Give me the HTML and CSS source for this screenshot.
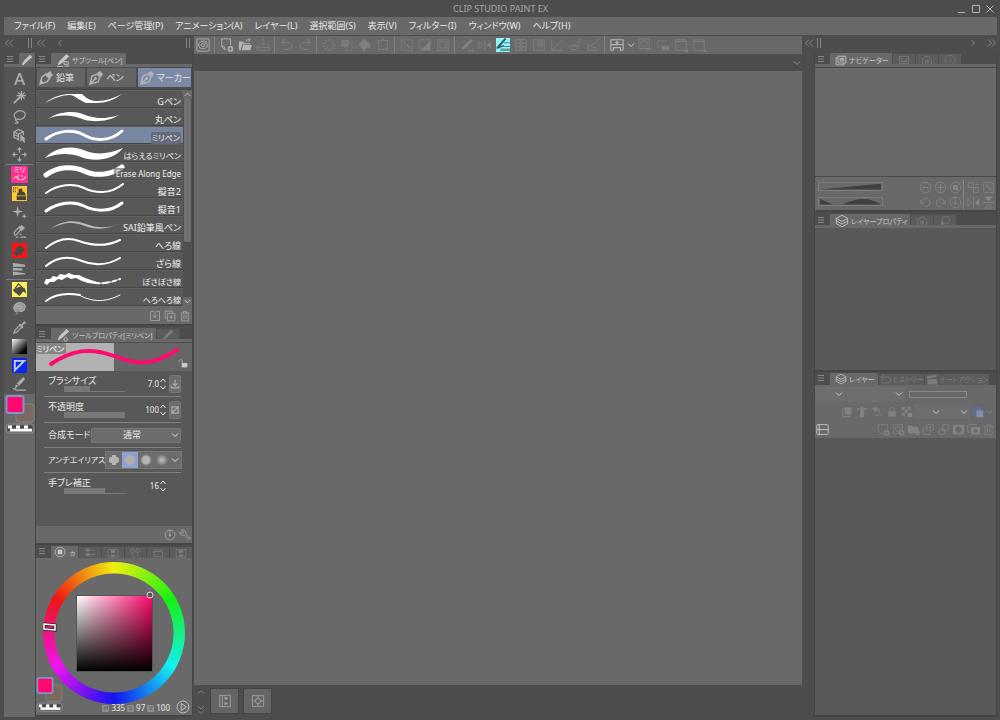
FILE: index.html
```html
<!DOCTYPE html>
<html lang="ja">
<head>
<meta charset="utf-8">
<meta name="viewport" content="width=device-width, initial-scale=1">
<title>CLIP STUDIO PAINT EX</title>
<link rel="stylesheet" href="styles.css">
</head>
<body>
<svg class="sprite" aria-hidden="true">
  <symbol id="dleft" viewBox="0 0 10 10"><path d="M5 1.500L1.500 5L5 8.500M9 1.500L5.500 5L9 8.500"/></symbol>
  <symbol id="dright" viewBox="0 0 10 10"><path d="M1 1.500L4.500 5L1 8.500M5 1.500L8.500 5L5 8.500"/></symbol>
  <symbol id="left" viewBox="0 0 10 10"><path d="M6.500 2L3.500 5L6.500 8"/></symbol>
  <symbol id="right" viewBox="0 0 10 10"><path d="M3.500 2L6.500 5L3.500 8"/></symbol>
  <symbol id="down" viewBox="0 0 10 10"><path d="M2 3.500L5 6.500L8 3.500"/></symbol>
  <symbol id="up" viewBox="0 0 10 10"><path d="M2 6.500L5 3.500L8 6.500"/></symbol>
  <symbol id="ddown" viewBox="0 0 10 10"><path d="M2 1L5 4L8 1M2 5.500L5 8.500L8 5.500"/></symbol>
  <symbol id="spin" viewBox="0 0 8 14"><path d="M1.500 5L4 2L6.500 5M1.500 9L4 12L6.500 9"/></symbol>
  <symbol id="grip" viewBox="0 0 10 10"><path d="M3.500 0V10M6.500 0V10"/></symbol>
  <symbol id="menu" viewBox="0 0 10 10"><path d="M2 2.500H8M2 5H8M2 7.500H8"/></symbol>
  <symbol id="marker" viewBox="0 0 16 16"><path class="f" d="M2 13L4 9L12 1L15 4L7 11L3 14ZM1 15H8V16H1Z"/><path d="M9 10H14V13H9ZM10 15H15"/></symbol>
  <symbol id="brushgear" viewBox="0 0 16 16"><path class="f" d="M2 13L4 9L12 1L15 4L7 11L3 14Z"/><circle cx="11" cy="13" r="2"/></symbol>
  <symbol id="brushonly" viewBox="0 0 16 16"><path class="f" d="M1 14L4 9L12 1L15 4L7 11L3 15Z"/></symbol>
  <symbol id="nib" viewBox="0 0 16 16"><path stroke-width="1.400" d="M2 14L4 6L9 4L12 7L10 12ZM2 14L7 9"/><path class="f" d="M9 3L12 1L15 4L13 7Z"/><circle class="f" cx="7.500" cy="8.500" r="1.400"/></symbol>
  <symbol id="pencil" viewBox="0 0 16 16"><path stroke-width="1.400" d="M2 14L4 7L8 4L12 8L9 12Z"/><path class="f" d="M7 5L12 1L15 5L11 9ZM2 14L3 10L6 13Z"/></symbol>
  <symbol id="wand" viewBox="0 0 16 16"><path class="t" d="M2 14L9 7"/><path d="M10 1V11M5 6H15M6.500 2.500L13.500 9.500M13.500 2.500L6.500 9.500"/></symbol>
  <symbol id="lasso" viewBox="0 0 16 16"><path d="M4 10C-1 6 6 1 10 2C17 3 14 11 8 11C5 11 3 10 4 12C5 14 7 13 6 15H3"/></symbol>
  <symbol id="cube" viewBox="0 0 16 16"><path d="M2 4L7 1.500L12 4V8M2 4V10L7 12.500V6.500L2 4M7 6.500L12 4M2 7L7 9"/><path class="f" d="M9 7V15L11 13L13 16L14 15L13 12H15Z"/></symbol>
  <symbol id="move" viewBox="0 0 16 16"><path d="M8 1V6M8 10V15M1 8H6M10 8H15M6 3L8 1L10 3M6 13L8 15L10 13M3 6L1 8L3 10M13 6L15 8L13 10"/></symbol>
  <symbol id="spark" viewBox="0 0 16 16"><path class="f" d="M6 1L7.200 5.800L12 7L7.200 8.200L6 13L4.800 8.200L0 7L4.800 5.800ZM13 9L13.700 11.300L16 12L13.700 12.700L13 15L12.300 12.700L10 12L12.300 11.300Z"/></symbol>
  <symbol id="eraser" viewBox="0 0 16 16"><path d="M3 8L8 3L10 5L5 11C2 14 2 9 3 8M4 14H7M9 14H15M8 11H10"/><path class="f" d="M7 4L10 1L14 4L10 8Z"/></symbol>
  <symbol id="gradlines" viewBox="0 0 16 16"><path class="f" d="M1 1H2L14 3V5H1ZM1 6L11 7V9H1ZM1 10L14 12V13L1 14Z"/></symbol>
  <symbol id="blob" viewBox="0 0 16 16"><path class="f" d="M4 12C-2 7 5 1 10 2C17 4 14 12 8 11C5 10 9 13 3 15L6 12Z" opacity=".75"/><path d="M4 11C-1 6 5 1 10 2C17 4 14 12 8 11M4 8C4 5 11 4 11 7C10 9 6 9 7 7"/></symbol>
  <symbol id="dropper" viewBox="0 0 16 16"><path d="M2 14L3 11L9 5L11 7L5 13Z"/><path class="f" d="M8 4L10 5L13 1L15 3L11 6L12 8L11 9L7 5Z"/></symbol>
  <symbol id="fixline" viewBox="0 0 16 16"><path d="M1 12L5 14H15"/><path class="f" d="M3 13L4 8L7 9ZM5 7L12 0L14 2L8 9Z"/></symbol>
  <symbol id="swirl" viewBox="0 0 16 16"><rect x="1" y="1" width="14" height="14" rx="1"/><path d="M13 5C9 2 3 4 3 8C3 14 12 13 13 9C13 4 6 5 6 8C6 11 11 10 10 8C9 7 8 8 8 8"/></symbol>
  <symbol id="newdoc" viewBox="0 0 16 16"><path d="M7 13H5L2 10V1H12V8M2 10H5V13"/><circle class="f" cx="12" cy="12.500" r="3.300"/><path class="k" d="M12 10.500V14.500M10 12.500H14"/></symbol>
  <symbol id="open" viewBox="0 0 16 16"><path class="f" d="M1 4H6L7 6H14V7H5L3 14H1ZM6 8H16L14 14H4Z"/><path d="M9 4C9 2 11 2 14 2M12 0.500L14 2L12 4"/></symbol>
  <symbol id="save" viewBox="0 0 16 16"><path d="M3 6L1 11V14H15V11L13 6M1 11H15M8 1V8M5 5.500L8 8.500L11 5.500"/></symbol>
  <symbol id="undo" viewBox="0 0 16 16"><path d="M6 1L2 5L6 8M2 5H9C15 5 15 13 9 13H4"/></symbol>
  <symbol id="redo" viewBox="0 0 16 16"><path d="M10 1L14 5L10 8M14 5H7C1 5 1 13 7 13H12"/></symbol>
  <symbol id="burst" viewBox="0 0 16 16"><circle class="dash" cx="8" cy="8" r="5.500"/></symbol>
  <symbol id="outfill" viewBox="0 0 16 16"><path class="f" d="M1 2H10V10H1Z" opacity=".7"/><circle class="dash2" cx="10" cy="10" r="4.500"/></symbol>
  <symbol id="bucket" viewBox="0 0 16 16"><path class="f" d="M1 7L7 1L13 6L15 13L11 10L7 15L1 8Z"/></symbol>
  <symbol id="crop" viewBox="0 0 16 16"><path d="M3 3H13V13H3ZM8 0V3M1 3H3M13 3H15M3 13V15M13 13V15"/></symbol>
  <symbol id="desel" viewBox="0 0 16 16"><path stroke-dasharray="2 1" d="M2 2H14V14H2Z"/><path d="M2 2L14 14"/></symbol>
  <symbol id="invsel" viewBox="0 0 16 16"><path stroke-dasharray="2 1" d="M2 2H14V14H2Z"/><path class="f" d="M14 3V14H3Z"/></symbol>
  <symbol id="bordersel" viewBox="0 0 16 16"><rect x="2" y="2" width="12" height="12"/><rect x="4.500" y="4.500" width="7" height="7"/></symbol>
  <symbol id="pen2" viewBox="0 0 16 16"><path class="f" d="M1 14L4 9L12 1L15 3L7 11ZM9 14H13L15 12V15H9Z"/></symbol>
  <symbol id="mirror" viewBox="0 0 16 16"><path d="M1 4V12L6 8ZM8 2V14"/><path class="f" d="M15 4V12L10 8Z"/></symbol>
  <symbol id="split" viewBox="0 0 16 16"><path d="M2 2H14V14H2ZM2 6H7M2 10H7M9 6H14M9 10H14M7 2V14M9 2V14"/></symbol>
  <symbol id="gradbox" viewBox="0 0 16 16"><rect x="2" y="2" width="12" height="12"/><path class="f" d="M6 3H13V10H6Z" opacity=".6"/></symbol>
  <symbol id="ruler1" viewBox="0 0 16 16"><path d="M2 3V14H14M3 13L15 2"/></symbol>
  <symbol id="ruler2" viewBox="0 0 16 16"><path d="M1 9C2 15 11 15 12 9M6 10L15 1M1 9H12"/></symbol>
  <symbol id="ruler3" viewBox="0 0 16 16"><path d="M2 9H7L15 1M2 9V14H14M6 11H12"/></symbol>
  <symbol id="device" viewBox="0 0 16 16"><path stroke-width="1.300" d="M1 7V2H15V7M1 7.500H15V14M1 7V14H4V11H12V14H15"/><path class="f" d="M7 4H9V8H7ZM5 5L8 3L11 5Z"/></symbol>
  <symbol id="zoomswap" viewBox="0 0 16 16"><rect x="1" y="1" width="12" height="11" rx="1"/><circle cx="7" cy="6.500" r="3.500"/><path d="M9 13H15L13 11"/></symbol>
  <symbol id="window" viewBox="0 0 16 16"><rect x="2" y="2" width="12" height="12" rx="1"/><path d="M2 4H14"/><path class="f" d="M12 16L16 12V16Z"/></symbol>
  <symbol id="handoff" viewBox="0 0 16 16"><path stroke-dasharray="2 1" d="M2 3H12M2 3V10H7"/><path class="f" d="M7 9H15V14H7Z"/></symbol>
  <symbol id="dlbox" viewBox="0 0 16 16"><path d="M6 2H2V14H14V2H10M8 1V10M5 7L8 10L11 7"/></symbol>
  <symbol id="copyplus" viewBox="0 0 16 16"><path d="M4 11H1.500V1.500H11V4"/><rect x="4.500" y="4.500" width="10" height="10" rx="1"/><path d="M9.500 7V12M7 9.500H12"/></symbol>
  <symbol id="trash" viewBox="0 0 16 16"><path d="M2 4H14M6 4V2H10V4M3.500 4V14.500H12.500V4M6.500 6V12M9.500 6V12"/></symbol>
  <symbol id="lock" viewBox="0 0 16 16"><path class="f" d="M6 8H15V15H6Z"/><path d="M7 8V5C7 2 1 2 1.500 6"/></symbol>
  <symbol id="padlock" viewBox="0 0 16 16"><path class="f" d="M3 7H13V14H3Z"/><path d="M5 7V5C5 1 11 1 11 5V7"/></symbol>
  <symbol id="press" viewBox="0 0 16 16"><path class="t" d="M8 1V10M4 7L8 11L12 7M2 11V14H14V11"/></symbol>
  <symbol id="nobox" viewBox="0 0 16 16"><path class="t" d="M3 3H13V13H3ZM4 12L12 4"/></symbol>
  <symbol id="reset" viewBox="0 0 16 16"><circle cx="8" cy="8" r="6.500"/><path d="M8 1V8"/><circle class="f" cx="8" cy="8.500" r="1.500"/></symbol>
  <symbol id="wrench" viewBox="0 0 16 16"><path d="M7 8L13 14L15 12L9 7C10 2 6 0 3 2L6 4L4 6L1 4C1 8 4 9 7 8Z"/></symbol>
  <symbol id="wheelico" viewBox="0 0 16 16"><circle cx="8" cy="8" r="6.500"/><path class="f" d="M5 5H11V11H5Z"/></symbol>
  <symbol id="sliders" viewBox="0 0 16 16"><path d="M1 4H4M7 4H15M1 10H4M7 10H15"/><path class="f" d="M3 2H7V6H3ZM3 8H7V12H3Z"/></symbol>
  <symbol id="film" viewBox="0 0 16 16"><rect x="1.500" y="3.500" width="13" height="10"/><path class="f" d="M5 4H11V8H5ZM5 10H11V13H5Z"/></symbol>
  <symbol id="bulbs" viewBox="0 0 16 16"><circle cx="4.500" cy="5" r="2.500"/><circle cx="11.500" cy="5" r="2.500"/><path d="M4.500 8V13H8M11.500 8V13"/></symbol>
  <symbol id="cards" viewBox="0 0 16 16"><path d="M2 11V6H4V4H14M4 6H14V13H4Z"/></symbol>
  <symbol id="playring" viewBox="0 0 16 16"><circle cx="8" cy="8" r="6.800"/><path d="M6 4L12 8L6 12Z"/></symbol>
  <symbol id="timeline" viewBox="0 0 16 16"><rect x="2" y="1.500" width="12" height="13"/><path d="M5 2V14M8 7V3M8 13V9"/><path class="f" d="M8 4H11V6H8ZM8 10H11V12H8Z"/></symbol>
  <symbol id="target" viewBox="0 0 16 16"><rect x="1.500" y="2" width="13" height="12"/><circle cx="8" cy="8" r="3"/><path d="M8 2V6M8 10V14M2 8H6M10 8H14"/></symbol>
  <symbol id="navi" viewBox="0 0 16 16"><path d="M4 3H14.500V12H4ZM4 5H1.500V14.500H12V12"/><path class="f" d="M6 5H12.500V10H6Z" opacity=".6"/></symbol>
  <symbol id="info" viewBox="0 0 16 16"><circle cx="8" cy="8" r="6.500"/><path d="M8 7V12M8 4V5.500"/></symbol>
  <symbol id="subview" viewBox="0 0 16 16"><path d="M2 3H14V13H2Z"/><path class="f" d="M4 5H6V9H10V5H12V11H4Z" opacity=".7"/></symbol>
  <symbol id="cloud" viewBox="0 0 16 16"><path d="M2 14V9C2 1 14 1 14 9V14"/><circle class="f" cx="8" cy="10" r="3" opacity=".6"/></symbol>
  <symbol id="layers" viewBox="0 0 16 16"><path d="M1.500 5L8 1.500L14.500 5L8 8.500ZM1.500 8L8 11.500L14.500 8M1.500 11L8 14.500L14.500 11M1.500 5V11M14.500 5V11"/></symbol>
  <symbol id="leaf" viewBox="0 0 16 16"><path class="f" d="M3 14V8L7 12Z"/><circle cx="9" cy="7" r="5"/></symbol>
  <symbol id="history" viewBox="0 0 16 16"><path d="M5 1L1 4L5 7M1 4H10C16 4 16 12 10 12H2"/></symbol>
  <symbol id="clap" viewBox="0 0 16 16"><path class="f" d="M1 3L14 1V4L1 6ZM2 7H15V14H2Z"/></symbol>
  <symbol id="minusring" viewBox="0 0 16 16"><circle cx="8" cy="8" r="6.500"/><path d="M4 8H12"/></symbol>
  <symbol id="plusring" viewBox="0 0 16 16"><circle cx="8" cy="8" r="6.500"/><path d="M4 8H12M8 4V12"/></symbol>
  <symbol id="fit" viewBox="0 0 16 16"><path d="M2 2H8V8H2ZM8 8H14V14H8ZM10 4H14V6"/></symbol>
  <symbol id="fitwin" viewBox="0 0 16 16"><rect x="2" y="2" width="12" height="12" rx="1"/><path d="M5 5L11 11M5 8V5H8M11 8V11H8"/></symbol>
  <symbol id="rotl" viewBox="0 0 16 16"><path d="M2 5V9H6M3 9C4 1 14 2 13 9C13 12 10 14 7 13"/></symbol>
  <symbol id="rotr" viewBox="0 0 16 16"><path d="M14 5V9H10M13 9C12 1 2 2 3 9C3 12 6 14 9 13"/></symbol>
  <symbol id="fliph" viewBox="0 0 16 16"><path d="M1 3V13L6 8ZM8 1V15"/><path class="f" d="M15 3V13L10 8Z"/></symbol>
  <symbol id="flipv" viewBox="0 0 16 16"><path d="M3 15H13L8 10ZM1 8H15"/><path class="f" d="M3 1H13L8 6Z"/></symbol>
  <symbol id="clip" viewBox="0 0 16 16"><rect x="2" y="4" width="10" height="10"/><path class="f" d="M5 2H14V11H5Z"/></symbol>
  <symbol id="tower" viewBox="0 0 16 16"><path class="f" d="M6 1H10V3H15V5H10L11 15H5L6 5H1V3H6Z"/></symbol>
  <symbol id="draft" viewBox="0 0 16 16"><path class="f" d="M2 2H8V7H4Z"/><path d="M8 4H11V9L7 13H14"/></symbol>
  <symbol id="checker" viewBox="0 0 16 16"><path class="f" d="M1 1H5V5H1ZM9 1H13V5H9ZM5 5H9V9H5ZM1 9H5V13H1ZM9 9H15V15H9Z"/></symbol>
  <symbol id="newlayer" viewBox="0 0 16 16"><path d="M8 13H5L1.500 10V2H13V8"/><circle class="f" cx="12" cy="12" r="3.500"/><path class="k" d="M12 10V14M10 12H14"/></symbol>
  <symbol id="newvec" viewBox="0 0 16 16"><path d="M8 13H1.500V2H13V8M4 8C4 3 11 3 11 8M5 10H9"/><circle class="f" cx="12" cy="12" r="3.500"/><path class="k" d="M12 10V14M10 12H14"/></symbol>
  <symbol id="folder" viewBox="0 0 16 16"><path class="f" d="M1 3H6L8 5H14V9L9 13H1Z"/><circle class="f" cx="13" cy="12" r="3"/></symbol>
  <symbol id="transfer" viewBox="0 0 16 16"><path d="M6 2H14V9H6ZM6 6H1.500V14H10V9M10 4V7M8.500 5.500H11.500"/></symbol>
  <symbol id="mergedn" viewBox="0 0 16 16"><path d="M7 2H14V9H7ZM7 7L5 9H9M2 9V14H9V9"/></symbol>
  <symbol id="mask" viewBox="0 0 16 16"><path class="f" fill-rule="evenodd" d="M1 2H15V14H1ZM8 4A4 4 0 1 0 8.010 4Z"/></symbol>
  <symbol id="maskon" viewBox="0 0 16 16"><path d="M4 11H1V2H11V4"/><path class="f" fill-rule="evenodd" d="M5 5H16V14H5ZM10.500 7A2.500 2.500 0 1 0 10.510 7Z"/></symbol>
  <symbol id="pane" viewBox="0 0 16 16"><rect x="1" y="2" width="14" height="12" rx="1"/><path d="M1 8H15M4 2V14"/></symbol>
  <symbol id="swatches" viewBox="0 0 30 42">
    <rect x="11" y="10" width="18" height="18" rx="3" fill="#7a695f" stroke="#858585"/>
    <rect x="1.500" y="2" width="17" height="17" rx="2" fill="#ff0a6c" stroke="#7c95cf" stroke-width="2"/>
    <rect x="1" y="30" width="28" height="9" rx="3" fill="#606060" stroke="#8c8c8c"/>
    <path d="M3 33H27" stroke="#fff" stroke-width="3" stroke-dasharray="4 4"/>
    <path d="M3 36H27" stroke="#fff" stroke-width="3"/>
    <path d="M7 33H27M3 36H5" stroke="#444" stroke-width="3" stroke-dasharray="4 4"/>
  </symbol>
</svg>

<header class="titlebar">
  <h1 class="title">CLIP STUDIO PAINT EX</h1>
  <div class="winbtns">
    <button aria-label="最小化"><svg viewBox="0 0 10 10"><path d="M1 8.500H8"/></svg></button>
    <button aria-label="最大化"><svg viewBox="0 0 10 10"><path d="M1.500 1.500H8.500V8.500H1.500Z"/></svg></button>
    <button aria-label="閉じる"><svg viewBox="0 0 10 10"><path d="M1.500 1.500L8.500 8.500M8.500 1.500L1.500 8.500"/></svg></button>
  </div>
</header>
<nav class="menubar">
  <button>ファイル(F)</button><button>編集(E)</button><button>ページ管理(P)</button><button>アニメーション(A)</button><button>レイヤー(L)</button><button>選択範囲(S)</button><button>表示(V)</button><button>フィルター(I)</button><button>ウィンドウ(W)</button><button>ヘルプ(H)</button>
</nav>

<main class="workspace">
  <aside class="toolcol">
    <div class="dockbar"><svg class="i10"><use href="#dleft"/></svg><svg class="i10 end"><use href="#grip"/></svg></div>
    <div class="tabs"><svg class="i10 burger"><use href="#menu"/></svg><button class="tab on" aria-label="ツール"><svg class="i12"><use href="#brushonly"/></svg></button></div>
    <div class="tools">
      <button class="letter">A</button>
      <button aria-label="自動選択"><svg><use href="#wand"/></svg></button>
      <button aria-label="選択範囲"><svg><use href="#lasso"/></svg></button>
      <button aria-label="操作"><svg><use href="#cube"/></svg></button>
      <button aria-label="移動"><svg><use href="#move"/></svg></button>
      <hr>
      <button class="picked"><span class="milli">ミリ<br>ペン</span></button>
      <button aria-label="エアブラシ"><svg viewBox="0 0 16 16"><path fill="#ffc63c" d="M0 0H16V16H0Z"/><path fill="#4a4030" d="M7 3H11V6H13L15 10H5L6 7H7ZM5 11H15V15H5Z"/><path stroke="#4a4030" stroke-dasharray="1 1" d="M1 2H6M1 4H5M1 6H4"/></svg></button>
      <button aria-label="デコレーション"><svg><use href="#spark"/></svg></button>
      <button aria-label="消しゴム"><svg><use href="#eraser"/></svg></button>
      <button aria-label="修正"><svg viewBox="0 0 16 16"><path fill="#ff1414" d="M0 0H16V16H0Z"/><path fill="#4c4848" d="M4 6L8 2L14 7L9 13L4 10ZM1 10L3 8L7 12L5 15Z"/></svg></button>
      <button aria-label="グラデーション"><svg><use href="#gradlines"/></svg></button>
      <hr>
      <button aria-label="塗りつぶし"><svg viewBox="0 0 16 16"><path fill="#ffee5c" d="M0 0H16V16H0Z"/><path fill="#4a4a42" d="M1 8L8 5L14 7L15 12L12 10L8 15L2 10Z"/><path stroke="#4a4a42" fill="none" d="M3 7L7 2L13 8"/></svg></button>
      <button aria-label="色混ぜ"><svg><use href="#blob"/></svg></button>
      <button aria-label="スポイト"><svg><use href="#dropper"/></svg></button>
      <button aria-label="階調"><span class="gradtool"></span></button>
      <button aria-label="定規"><svg viewBox="0 0 16 16"><path fill="#0a28f0" d="M0 0H16V16H0Z"/><path fill="none" stroke="#ccd" stroke-width="2" d="M3 3H13L3 13Z"/></svg></button>
      <button aria-label="線修正"><svg><use href="#fixline"/></svg></button>
    </div>
    <button class="swatchbtn" aria-label="描画色"><svg class="swatches"><use href="#swatches"/></svg></button>
  </aside>

  <aside class="subcol">
    <div class="dockbar"><svg class="i10"><use href="#dleft"/></svg><svg class="i10 gapl"><use href="#left"/></svg><svg class="i10 end"><use href="#grip"/></svg></div>
    <section class="panel">
      <div class="tabs"><svg class="i10 burger"><use href="#menu"/></svg><button class="tab on"><svg class="i14"><use href="#marker"/></svg>サブツール[ペン]</button></div>
      <div class="groups">
        <button><svg class="i16"><use href="#pencil"/></svg>鉛筆</button>
        <button><svg class="i16"><use href="#nib"/></svg>ペン</button>
        <button class="on"><svg class="i16"><use href="#nib"/></svg>マーカー</button>
      </div>
      <div class="listwrap">
        <div class="list">
          <button><svg viewBox="0 0 90 17"><path class="w" d="M9 12C18 5 27 3 34 3H46C52 9 56 10 62 10C70 10 78 7 86 3C78 9 70 12 60 12H50C43 9 38 4 34 4C26 4 18 7 9 12Z"/></svg><span>Gペン</span></button>
          <button><svg viewBox="0 0 90 17"><path class="w" d="M12 10C22 3 34 2 44 4C54 8 64 12 83 6C72 13 58 13 49 11C39 7 25 4 12 10Z"/></svg><span>丸ペン</span></button>
          <button class="on"><svg viewBox="0 0 90 17"><path class="s3" d="M10 12C22 3 38 2 48 8S74 15 86 4"/></svg><span class="narrow"><b>ミリペン</b></span></button>
          <button><svg viewBox="0 0 90 17"><path class="w" d="M9 13C20 1 38 0 50 6C60 10 74 9 87 3C76 16 58 17 45 12C32 7 20 9 9 13Z"/></svg><span class="narrow">はらえるミリペン</span></button>
          <button><svg viewBox="0 0 90 17"><path class="s5" d="M10 12C22 3 38 3 48 8S74 13 86 4"/></svg><span class="narrow veil">Erase Along Edge</span></button>
          <button><svg viewBox="0 0 90 17"><path class="s2" d="M10 12C22 3 38 2 48 7S74 14 87 3"/></svg><span>擬音2</span></button>
          <button><svg viewBox="0 0 90 17"><path class="s3" d="M10 12C22 3 38 2 48 7S74 14 86 4"/></svg><span>擬音1</span></button>
          <button><svg viewBox="0 0 90 17"><path class="w dim" d="M14 12C28 2 40 3 50 7S74 12 84 6C72 13 60 13 49 9S30 4 14 12Z"/></svg><span>SAI鉛筆風ペン</span></button>
          <button><svg viewBox="0 0 90 17"><path class="s2" d="M10 13C20 5 32 2 43 6S68 13 84 5"/></svg><span>へろ線</span></button>
          <button><svg viewBox="0 0 90 17"><path class="s2" d="M10 13C22 3 34 3 46 8S72 12 84 5"/></svg><span>ざら線</span></button>
          <button><svg viewBox="0 0 90 17"><path class="w" d="M8 12L10 8L14 8L17 5L21 6L24 3L29 4L33 2L38 4L43 4L49 7L55 9L61 11L60 13L52 12L46 10L40 7L35 8L31 6L26 9L22 8L18 11L14 11L11 14Z"/><path class="s2" stroke-dasharray="3 4 6 4" d="M60 12C68 13 76 11 84 8"/><path class="s1" d="M56 11C68 14 76 11 84 8"/></svg><span class="narrow">ぼさぼさ線</span></button>
          <button><svg viewBox="0 0 90 17"><path class="s2" d="M10 12C20 4 32 4 44 6"/><path class="s1" d="M43 6C58 14 70 13 84 6"/></svg><span class="narrow">へろへろ線</span></button>
        </div>
        <div class="scroll"><svg class="i10"><use href="#up"/></svg><i></i><svg class="i10"><use href="#down"/></svg></div>
      </div>
      <div class="footbar"><button aria-label="登録"><svg class="i12"><use href="#dlbox"/></svg></button><button aria-label="複製"><svg class="i12"><use href="#copyplus"/></svg></button><button aria-label="削除"><svg class="i12"><use href="#trash"/></svg></button></div>
    </section>

    <section class="panel props-panel">
      <div class="tabs"><svg class="i10 burger"><use href="#menu"/></svg><button class="tab on"><svg class="i14"><use href="#brushgear"/></svg>ツールプロパティ[ミリペン]</button><button class="tab" aria-label="ブラシ"><svg class="i12"><use href="#brushonly"/></svg></button></div>
      <div class="preview">
        <svg class="stroke" viewBox="0 0 156 28" preserveAspectRatio="none"><path d="M15 21C36 7 54 4 78 13S116 23 141 7"/></svg>
        <span class="pname">ミリペン</span>
        <svg class="i10 lockico"><use href="#lock"/></svg>
      </div>
      <div class="props">
        <div class="prop"><div class="lab"><label for="size">ブラシサイズ</label><input id="size" class="slider v43" type="range" value="43"></div><input class="num" aria-label="サイズ値" value="7.0"><svg class="spin"><use href="#spin"/></svg><button class="dyn" aria-label="サイズ影響元"><svg class="i10"><use href="#press"/></svg></button></div>
        <div class="prop"><div class="lab"><label for="opacity">不透明度</label><input id="opacity" class="slider v100" type="range" value="100"></div><input class="num" aria-label="不透明度値" value="100"><svg class="spin"><use href="#spin"/></svg><button class="dyn" aria-label="不透明度影響元"><svg class="i10"><use href="#nobox"/></svg></button></div>
        <div class="prop"><label for="blend">合成モード</label><div class="sel wide"><select id="blend"><option>通常</option></select><svg class="i10"><use href="#down"/></svg></div></div>
        <div class="prop"><span class="narrow">アンチエイリアス</span><div class="aa"><button aria-label="無し"><svg viewBox="0 0 16 16"><path fill="#b4b4b4" d="M6 3H10V5H12V6H13V10H12V11H10V13H6V11H4V10H3V6H4V5H6Z"/></svg></button><button class="on" aria-label="弱"><svg viewBox="0 0 16 16"><circle cx="8" cy="8" r="5" fill="#b0aeac"/></svg></button><button aria-label="中"><i class="soft"></i></button><button aria-label="強"><i class="soft softer"></i></button><svg class="i10"><use href="#down"/></svg></div></div>
        <div class="prop"><div class="lab"><label for="stab">手ブレ補正</label><input id="stab" class="slider v68" type="range" value="68"></div><input class="num" aria-label="補正値" value="16"><svg class="spin"><use href="#spin"/></svg><span class="dynspace"></span></div>
      </div>
      <div class="footbar"><button aria-label="初期化"><svg class="i12"><use href="#reset"/></svg></button><button aria-label="詳細"><svg class="i12"><use href="#wrench"/></svg></button></div>
    </section>

    <section class="panel colour-panel">
      <div class="tabs low even"><svg class="i10 burger"><use href="#menu"/></svg><button class="tab on"><svg class="i12"><use href="#wheelico"/></svg>ヵ</button><button class="tab" aria-label="スライダー"><svg class="i12"><use href="#sliders"/></svg></button><button class="tab" aria-label="カラーセット"><svg class="i12"><use href="#film"/></svg></button><button class="tab" aria-label="中間色"><svg class="i12"><use href="#bulbs"/></svg></button><button class="tab" aria-label="近似色"><svg class="i12"><use href="#cards"/></svg></button><button class="tab" aria-label="ヒストリー"><svg class="i12"><use href="#film"/></svg></button></div>
      <div class="colour">
        <div class="wheel"><div class="ring"></div><div class="sv"></div>
          <svg class="marks" viewBox="0 0 142 142"><path d="M1 62L12 63V68L1 67Z" stroke="#222" stroke-width="3"/><path d="M1 62L12 63V68L1 67Z" stroke="#fff" stroke-width="1.500"/><circle cx="107" cy="33" r="3" fill="#555" stroke="#ddd"/></svg>
        </div>
        <div class="cfoot">
          <svg class="swatches small"><use href="#swatches"/></svg>
          <div class="hsv"><abbr>H</abbr><span>335</span><abbr>S</abbr><span>97</span><abbr>V</abbr><span>100</span></div>
          <button aria-label="色空間切替"><svg class="i14"><use href="#playring"/></svg></button>
        </div>
      </div>
    </section>
  </aside>

  <section class="center">
    <div class="commands">
      <button class="lit" aria-label="CLIP STUDIO"><svg><use href="#swirl"/></svg></button><hr>
      <button class="lit" aria-label="新規"><svg><use href="#newdoc"/></svg></button><button class="lit" aria-label="開く"><svg><use href="#open"/></svg></button><button aria-label="保存"><svg><use href="#save"/></svg></button><hr>
      <button aria-label="取り消し"><svg><use href="#undo"/></svg></button><button aria-label="やり直し"><svg><use href="#redo"/></svg></button><hr>
      <button aria-label="消去"><svg><use href="#burst"/></svg></button><button aria-label="選択範囲外を消去"><svg><use href="#outfill"/></svg></button><button aria-label="塗りつぶし"><svg><use href="#bucket"/></svg></button><button aria-label="変形"><svg><use href="#crop"/></svg></button><hr>
      <button aria-label="選択を解除"><svg><use href="#desel"/></svg></button><button aria-label="選択範囲を反転"><svg><use href="#invsel"/></svg></button><button aria-label="境界線"><svg><use href="#bordersel"/></svg></button><hr>
      <button aria-label="ペン"><svg><use href="#pen2"/></svg></button><button aria-label="反転"><svg><use href="#mirror"/></svg></button>
      <button aria-label="定規にスナップ"><svg viewBox="0 0 16 16"><path fill="#8ff6fa" d="M0 0H16V16H0Z"/><path fill="#365c60" d="M1 10L10 0L12 1L5 9L9 8V9L3 12H0ZM9 5H16V6H9ZM6 9H16V10H6Z"/><path fill="#5e9ea2" d="M5 12H16V15H5Z"/></svg></button>
      <button aria-label="コマ"><svg><use href="#split"/></svg></button><button aria-label="グリッド"><svg><use href="#gradbox"/></svg></button><button aria-label="定規"><svg><use href="#ruler1"/></svg></button><button aria-label="曲線定規"><svg><use href="#ruler2"/></svg></button><button aria-label="特殊定規"><svg><use href="#ruler3"/></svg></button><hr>
      <button class="lit" aria-label="デバイス"><svg><use href="#device"/></svg></button><svg class="i10 litarrow"><use href="#down"/></svg>
      <button aria-label="拡大"><svg><use href="#zoomswap"/></svg></button><button aria-label="送る"><svg><use href="#handoff"/></svg></button><button aria-label="ウィンドウ1"><svg><use href="#window"/></svg></button><button aria-label="ウィンドウ2"><svg><use href="#window"/></svg></button>
    </div>
    <div class="docstrip"><svg class="i10"><use href="#down"/></svg></div>
    <div class="canvas"></div>
    <div class="bottombar">
      <div class="updown"><svg class="i10"><use href="#up"/></svg><svg class="i10"><use href="#ddown"/></svg></div>
      <button aria-label="タイムライン"><svg class="i14"><use href="#timeline"/></svg></button>
      <button aria-label="ライトテーブル"><svg class="i14"><use href="#target"/></svg></button>
    </div>
  </section>

  <aside class="rightcol">
    <div class="dockbar"><svg class="i10"><use href="#dleft"/></svg><svg class="i10"><use href="#grip"/></svg><svg class="i10 end"><use href="#right"/></svg><svg class="i10 gapl"><use href="#dright"/></svg></div>
    <section class="panel">
      <div class="tabs"><svg class="i10 burger"><use href="#menu"/></svg><button class="tab on"><svg class="i12"><use href="#navi"/></svg>ナビゲーター</button><button class="tab" aria-label="サブビュー"><svg class="i12"><use href="#subview"/></svg></button><button class="tab" aria-label="素材"><svg class="i12"><use href="#cloud"/></svg></button><button class="tab" aria-label="情報"><svg class="i12"><use href="#info"/></svg></button></div>
      <div class="navview"></div>
      <div class="navctl">
        <div class="ramps"><svg viewBox="0 0 64 9" preserveAspectRatio="none"><path d="M1 8.500L63 1V8.500Z"/></svg><svg viewBox="0 0 64 9" preserveAspectRatio="none"><path d="M1 1L14 8.500H1ZM24 8.500C40 -1 51 -1 63 8.500Z"/></svg></div>
        <div class="navbtns">
          <button aria-label="縮小"><svg><use href="#minusring"/></svg></button><button aria-label="拡大"><svg><use href="#plusring"/></svg></button><button aria-label="100%"><svg><use href="#wheelico"/></svg></button><button class="bar" aria-label="フィット"><svg><use href="#fit"/></svg></button><button aria-label="全体表示"><svg><use href="#fitwin"/></svg></button>
          <button aria-label="左回転"><svg><use href="#rotl"/></svg></button><button aria-label="右回転"><svg><use href="#rotr"/></svg></button><button aria-label="回転をリセット"><svg><use href="#reset"/></svg></button><button class="bar" aria-label="左右反転"><svg><use href="#fliph"/></svg></button><button aria-label="上下反転"><svg><use href="#flipv"/></svg></button>
        </div>
      </div>
    </section>
    <section class="panel layerprop">
      <div class="tabs"><svg class="i10 burger"><use href="#menu"/></svg><button class="tab on"><svg class="i14"><use href="#layers"/></svg>レイヤープロパティ</button><button class="tab" aria-label="検索"><svg class="i12"><use href="#cloud"/></svg></button><button class="tab" aria-label="色"><svg class="i12"><use href="#leaf"/></svg></button></div>
      <div class="well"></div>
    </section>
    <section class="panel layerpanel">
      <div class="tabs low"><svg class="i10 burger"><use href="#menu"/></svg><button class="tab on"><svg class="i12"><use href="#layers"/></svg>レイヤー</button><button class="tab tight"><svg class="i12"><use href="#history"/></svg>ヒストリー</button><button class="tab tight"><svg class="i12"><use href="#clap"/></svg>オートアクション</button></div>
      <div class="lrow1"><div class="sel"><select aria-label="パレットカラー"><option></option></select><svg class="i10"><use href="#down"/></svg></div><div class="sel mode"><select aria-label="合成モード"><option></option></select><svg class="i10"><use href="#down"/></svg></div><input class="lop" type="range" aria-label="不透明度" value="0"></div>
      <div class="lrow2"><button aria-label="クリッピング"><svg><use href="#clip"/></svg></button><button aria-label="参照"><svg><use href="#tower"/></svg></button><button aria-label="下描き"><svg><use href="#draft"/></svg></button><button aria-label="ロック"><svg><use href="#padlock"/></svg></button><button aria-label="透明ロック"><svg><use href="#checker"/></svg></button><div class="sel"><select aria-label="マスク"><option></option></select><svg class="i10"><use href="#down"/></svg></div><div class="sel"><select aria-label="定規範囲"><option></option></select><svg class="i10"><use href="#down"/></svg></div><button class="lcolor" aria-label="レイヤーカラー"><svg viewBox="0 0 16 16"><path fill="#5b6f97" d="M1 1H12V12H1Z"/><path fill="#8290ac" d="M6 6H15V15H6Z"/></svg><svg class="i10"><use href="#down"/></svg></button></div>
      <div class="lrow3"><button class="first" aria-label="表示切替"><svg><use href="#pane"/></svg></button><button aria-label="新規ラスター"><svg><use href="#newlayer"/></svg></button><button aria-label="新規ベクター"><svg><use href="#newvec"/></svg></button><button aria-label="新規フォルダー"><svg><use href="#folder"/></svg></button><button aria-label="転写"><svg><use href="#transfer"/></svg></button><button aria-label="結合"><svg><use href="#mergedn"/></svg></button><button aria-label="マスク作成"><svg><use href="#mask"/></svg></button><button aria-label="マスク適用"><svg><use href="#maskon"/></svg></button><button aria-label="レイヤー削除"><svg><use href="#trash"/></svg></button></div>
      <div class="well"></div>
    </section>
  </aside>
</main>
</body>
</html>
```
FILE: styles.css
```css
* { box-sizing: border-box; }
body {
  margin: 0;
  min-height: 100vh;
  display: flex;
  flex-direction: column;
  padding: 0 3px 3px 4px;
  background: #4d4d4d;
  color: #d6d6d6;
  font: 9px/12px "Noto Sans", "Noto Sans CJK JP", sans-serif;
  font-feature-settings: "palt";
}
button, input, select { font: inherit; font-feature-settings: inherit; color: inherit; margin: 0; }
button { background: none; border: 0; padding: 0; display: flex; align-items: center; justify-content: center; }
svg { display: block; flex: none; width: 16px; height: 16px; fill: none; stroke: currentColor; stroke-width: 1; }
svg path[fill]:not([stroke]), svg circle[fill]:not([stroke]) { stroke: none; }
.sprite { position: absolute; width: 0; height: 0; }
.f { fill: currentColor; stroke: none; }
.k { stroke: #696969; }
.t { stroke-width: 2; }
.dash { stroke-width: 3; stroke-dasharray: 1 2; }
.dash2 { stroke-width: 2; stroke-dasharray: 1 2; }
.i10 { width: 10px; height: 10px; }
.i12 { width: 12px; height: 12px; }
.i14 { width: 14px; height: 14px; }
.i16 { width: 16px; height: 16px; }
.end { margin-left: auto; }
.gapl { margin-left: 9px; }
.narrow { font-size: 8px; white-space: nowrap; }

/* title and menu */
.titlebar { height: 17px; display: grid; grid-template-columns: 1fr auto 1fr; align-items: center; }
.title { grid-column: 2; margin: 0; font-size: 9px; font-weight: 400; color: #a8a8a8; }
.winbtns { display: flex; justify-content: flex-end; gap: 4px; padding-right: 2px; color: #b4b4b4; }
.winbtns svg { width: 10px; height: 10px; }
.menubar { height: 18px; background: #696969; display: flex; align-items: center; gap: 12px; padding-left: 10px; color: #e6e6e6; }

.workspace { flex: 1; display: flex; }
.dockbar { height: 16px; display: flex; align-items: center; color: #858585; }
.tabs { height: 16px; display: flex; align-items: flex-end; gap: 1px; background: linear-gradient(to top, #696969 3px, #4d4d4d 3px); overflow: hidden; }
.burger { align-self: flex-start; margin: 3px 3px 0 1px; color: #888; }
.tab { height: 10px; min-width: 22px; margin-bottom: 3px; padding: 0 3px; gap: 2px; align-items: flex-start; background: #5c5c5c; color: #7c7c7c; font-size: 7px; line-height: 11px; white-space: nowrap; overflow: hidden; }
.tab.on { height: 14px; margin-bottom: 0; padding-left: 5px; align-items: center; background: #696969; color: #c8c8c8; }
.low { height: 13px; background: #4d4d4d; }
.low .burger { margin-top: 1px; }
.low .tab { height: 11px; margin-bottom: 0; }
.low .tab.on { height: 12px; }
.low .tight { padding: 0 1px; gap: 1px; align-items: center; }
.panel { background: #696969; border: 1px solid #454545; border-width: 0 1px 2px 1px; }

/* tool palette */
.toolcol { width: 31px; display: flex; flex-direction: column; background: #696969; }
.toolcol .dockbar { background: #4d4d4d; }
.toolcol .tab { min-width: 16px; padding: 0; }
.tools { background: #555; padding-top: 2px; color: #acacac; }
.tools button { width: 100%; height: 19px; }
.tools hr { height: 1px; margin: 0 2px; border: 0; background: #808080; }
.tools svg { width: 15px; height: 15px; stroke-width: 1.3; }
.letter { font: 500 17px/19px "Noto Sans", sans-serif; }
.milli { width: 17px; height: 17px; background: #ff318d; outline: 1px solid #4b506a; color: #fff; font-size: 7px; line-height: 8px; text-align: center; }
.gradtool { width: 15px; height: 15px; background: linear-gradient(135deg, #fff, #000 80%); }
.swatches { width: 30px; height: 42px; }
.swatchbtn { width: 100%; }

/* sub tools */
.subcol { width: 158px; display: flex; flex-direction: column; }
.subcol .dockbar { padding-left: 1px; }
.groups { display: grid; grid-template-columns: 1fr 1fr 1fr; gap: 2px; padding: 1px 1px 2px; background: #4d4d4d; }
.groups button { height: 19px; justify-content: flex-start; background: #646464; gap: 2px; padding-left: 1px; white-space: nowrap; color: #e2e2e2; }
.groups svg { color: #b4b4b4; }
.groups .on { background: #7d8aa7; }
.listwrap { display: flex; border-top: 1px solid #444; padding-bottom: 1px; }
.list { flex: 1; min-width: 0; background: #585858; }
.list button { width: 100%; height: 18px; display: grid; grid-template-columns: 1fr; align-items: center; border-bottom: 1px solid #464646; border-top: 1px solid #606060; }
.list button > * { grid-area: 1 / 1; }
.list svg { width: 90px; height: 17px; stroke: #fff; stroke-linecap: round; }
.list .on { background: #7986a1; }
.list span { justify-self: end; align-self: end; padding-right: 2px; line-height: 12px; color: #eee; }
.list b { font-weight: 400; background: #656b7a; border-radius: 2px; padding: 0 1px; display: block; }
.list .veil { padding-left: 2px; background: rgba(88, 88, 88, .6); }
.w { fill: #fff; stroke: none; }
.dim { opacity: .6; }
.s1 { stroke-width: 1; }
.s2 { stroke-width: 2; }
.s3 { stroke-width: 3; }
.s5 { stroke-width: 5; }
.scroll { width: 9px; display: flex; flex-direction: column; align-items: center; background: #505050; color: #ccc; }
.scroll svg { width: 9px; height: 9px; background: #696969; }
.scroll i { width: 7px; flex: 0 1 143px; background: #717171; border-radius: 2px; }
.scroll svg:last-child { margin-top: auto; }
.footbar { height: 17px; display: flex; align-items: center; justify-content: flex-end; gap: 3px; padding-right: 1px; color: #acacac; }

/* tool property */
.props-panel { flex: 1; display: flex; flex-direction: column; }
.preview { height: 29px; display: grid; background: linear-gradient(90deg, #b2b2b2 50%, #666 50%); border: 1px solid #505050; border-width: 1px 0 0; }
.preview > * { grid-area: 1 / 1; }
.stroke { width: 100%; height: 28px; stroke: #ff0b70; stroke-width: 4; stroke-linecap: round; }
.pname { justify-self: start; align-self: start; height: 11px; font-size: 8px; line-height: 11px; background: #868686; color: #fff; border-radius: 2px; padding-right: 2px; }
.lockico { justify-self: end; align-self: end; margin: 0 4px 3px 0; color: #ccc; }
.props { flex: 1; background: #585858; padding: 0 11px 0 8px; }
.prop { min-height: 26px; display: flex; align-items: center; padding-left: 4px; border-bottom: 1px solid #808080; color: #e6e6e6; }
.prop:nth-child(n+3) { min-height: 25px; }
.prop:last-child { border: 0; }
.lab { flex: 1; display: flex; flex-direction: column; }
.lab label { line-height: 11px; }
.slider { appearance: none; width: 61px; height: 6px; margin-left: 16px; border-bottom: 1px solid #7b7b7b; background: #585858 linear-gradient(#787878, #787878) no-repeat; }
.slider::-webkit-slider-thumb { appearance: none; width: 1px; height: 1px; }
.v43 { background-size: 43% 100%; }
.v68 { background-size: 68% 100%; }
.v100 { background-size: 100% 100%; }
.num { width: 22px; height: 12px; padding: 0; border: 0; background: none; text-align: right; font-size: 8px; }
.spin { width: 8px; height: 14px; }
.dyn, .dynspace { width: 12px; margin-left: 2px; }
.dyn { height: 18px; background: #6c6c6c; border: 1px solid #777; border-radius: 2px; color: #aaa; }
.sel { display: grid; align-items: center; }
.sel > * { grid-area: 1 / 1; }
.sel select { appearance: none; width: 100%; height: 15px; border: 0; padding: 0; background: #6c6c6c; text-align: center; border-radius: 1px; }
.sel svg { justify-self: end; margin-right: 1px; pointer-events: none; }
.wide { flex: 0 0 90px; margin-left: auto; }
.wide select { border: 1px solid #777; padding-right: 8px; }
.aa { display: flex; align-items: center; margin-left: auto; flex: 0 0 77px; height: 18px; background: #6c6c6c; border: 1px solid #777; }
.aa button { width: 16px; height: 16px; }
.aa .on { background: #8ea1d0; }
.soft { width: 12px; height: 12px; border-radius: 50%; background: radial-gradient(#b4b4b4 40%, #6c6c6c 70%); }
.softer { background: radial-gradient(#b4b4b4 15%, #6c6c6c 70%); }

/* colour wheel */
.even .tab { flex: 1; min-width: 0; padding: 0; }
.even .tab.on { flex: 0 0 27px; padding: 0; gap: 4px; }
.colour { display: grid; height: 157px; }
.colour > * { grid-area: 1 / 1; }
.wheel { justify-self: center; width: 142px; height: 142px; margin-top: 4px; display: grid; place-items: center; }
.wheel > * { grid-area: 1 / 1; }
.ring { width: 142px; height: 142px; border-radius: 50%; background: radial-gradient(circle, #696969 59px, transparent 60px), conic-gradient(#f0f010, #14f014 60deg, #14f0f0 120deg, #1414f0 180deg, #f014f0 240deg, #f01414 300deg, #f0f010); }
.sv { width: 77px; height: 77px; border: 1px solid #555; background: linear-gradient(transparent, #000), linear-gradient(90deg, #fff, #ff0a6c); }
.marks { width: 142px; height: 142px; }
.cfoot { align-self: end; display: flex; align-items: flex-end; padding: 0 2px 1px 0; color: #ccc; }
.small { width: 27px; height: 38px; }
.hsv { flex: 1; display: flex; justify-content: flex-end; align-items: center; gap: 2px; padding-right: 6px; color: #e8e8e8; font-size: 8px; }
.hsv abbr { width: 7px; height: 7px; background: #8c8c8c; color: #555; font-size: 6px; line-height: 7px; text-align: center; border-radius: 1px; }

/* centre */
.center { flex: 1; min-width: 0; display: flex; flex-direction: column; padding-left: 1px; }
.commands { height: 18px; margin-top: 1px; display: flex; align-items: center; background: #696969; color: #808080; }
.commands button { width: 18px; height: 18px; }
.commands svg { width: 14px; height: 14px; }
.commands hr { width: 1px; height: 18px; margin: 0 3px 0 2px; border: 0; background: #808080; }
.commands .lit { color: #b4b4b4; }
.commands .litarrow { width: 10px; height: 10px; color: #ccc; }
.docstrip { height: 17px; display: flex; align-items: center; justify-content: flex-end; color: #909090; }
.canvas { flex: 1; background: #696969; }
.bottombar { height: 32px; display: flex; align-items: center; gap: 4px; padding-left: 2px; color: #a4a4a4; }
.bottombar button { width: 29px; height: 26px; background: #646464; border: 1px solid #444; }
.updown { display: flex; flex-direction: column; gap: 8px; width: 10px; color: #808080; }

/* right column */
.rightcol { width: 195px; padding-left: 12px; display: flex; flex-direction: column; }
.rightcol .dockbar { margin-left: -12px; padding-left: 2px; }
.navview { height: 110px; border: 1px solid #484848; border-width: 1px 0; }
.navctl { display: flex; justify-content: space-between; padding: 3px 0 0 3px; height: 33px; color: #868686; }
.ramps { display: flex; flex-direction: column; gap: 6px; padding-top: 2px; }
.ramps svg { width: 65px; height: 9px; border: 1px solid #7c7c7c; fill: #404040; stroke: none; }
.navbtns { display: grid; grid-template-columns: 15px 15px 15px 18px 15px; grid-auto-rows: 15px; }
.navbtns svg { width: 13px; height: 13px; }
.bar { border-left: 1px solid #858585; padding-left: 2px; }
.well { flex: 1; background: #595959; }
.layerprop { height: 160px; display: flex; flex-direction: column; }
.layerpanel { flex: 1; display: flex; flex-direction: column; }
.lrow1 { display: grid; grid-template-columns: 30px 58px 58px; gap: 2px; align-items: center; height: 18px; }
.lrow1 select, .lrow2 select { background: #6e6e6e; }
.lrow1 .sel, .lrow2 .sel { color: #ccc; }
.lop { appearance: none; width: 58px; height: 7px; margin-left: 2px; border: 1px solid #888; background: #696969; }
.lop::-webkit-slider-thumb { appearance: none; width: 1px; }
.lrow2 { display: grid; grid-template-columns: repeat(5, 15px) 28px 28px 26px; justify-content: end; align-items: center; height: 17px; color: #828282; }
.lrow2 button > svg:first-child { width: 12px; height: 12px; }
.lrow3 { display: grid; grid-template-columns: 1fr repeat(8, 15px); align-items: center; height: 18px; color: #828282; }
.lrow3 svg { width: 13px; height: 13px; }
.first { justify-content: flex-start; padding-left: 1px; color: #ccc; }
```
